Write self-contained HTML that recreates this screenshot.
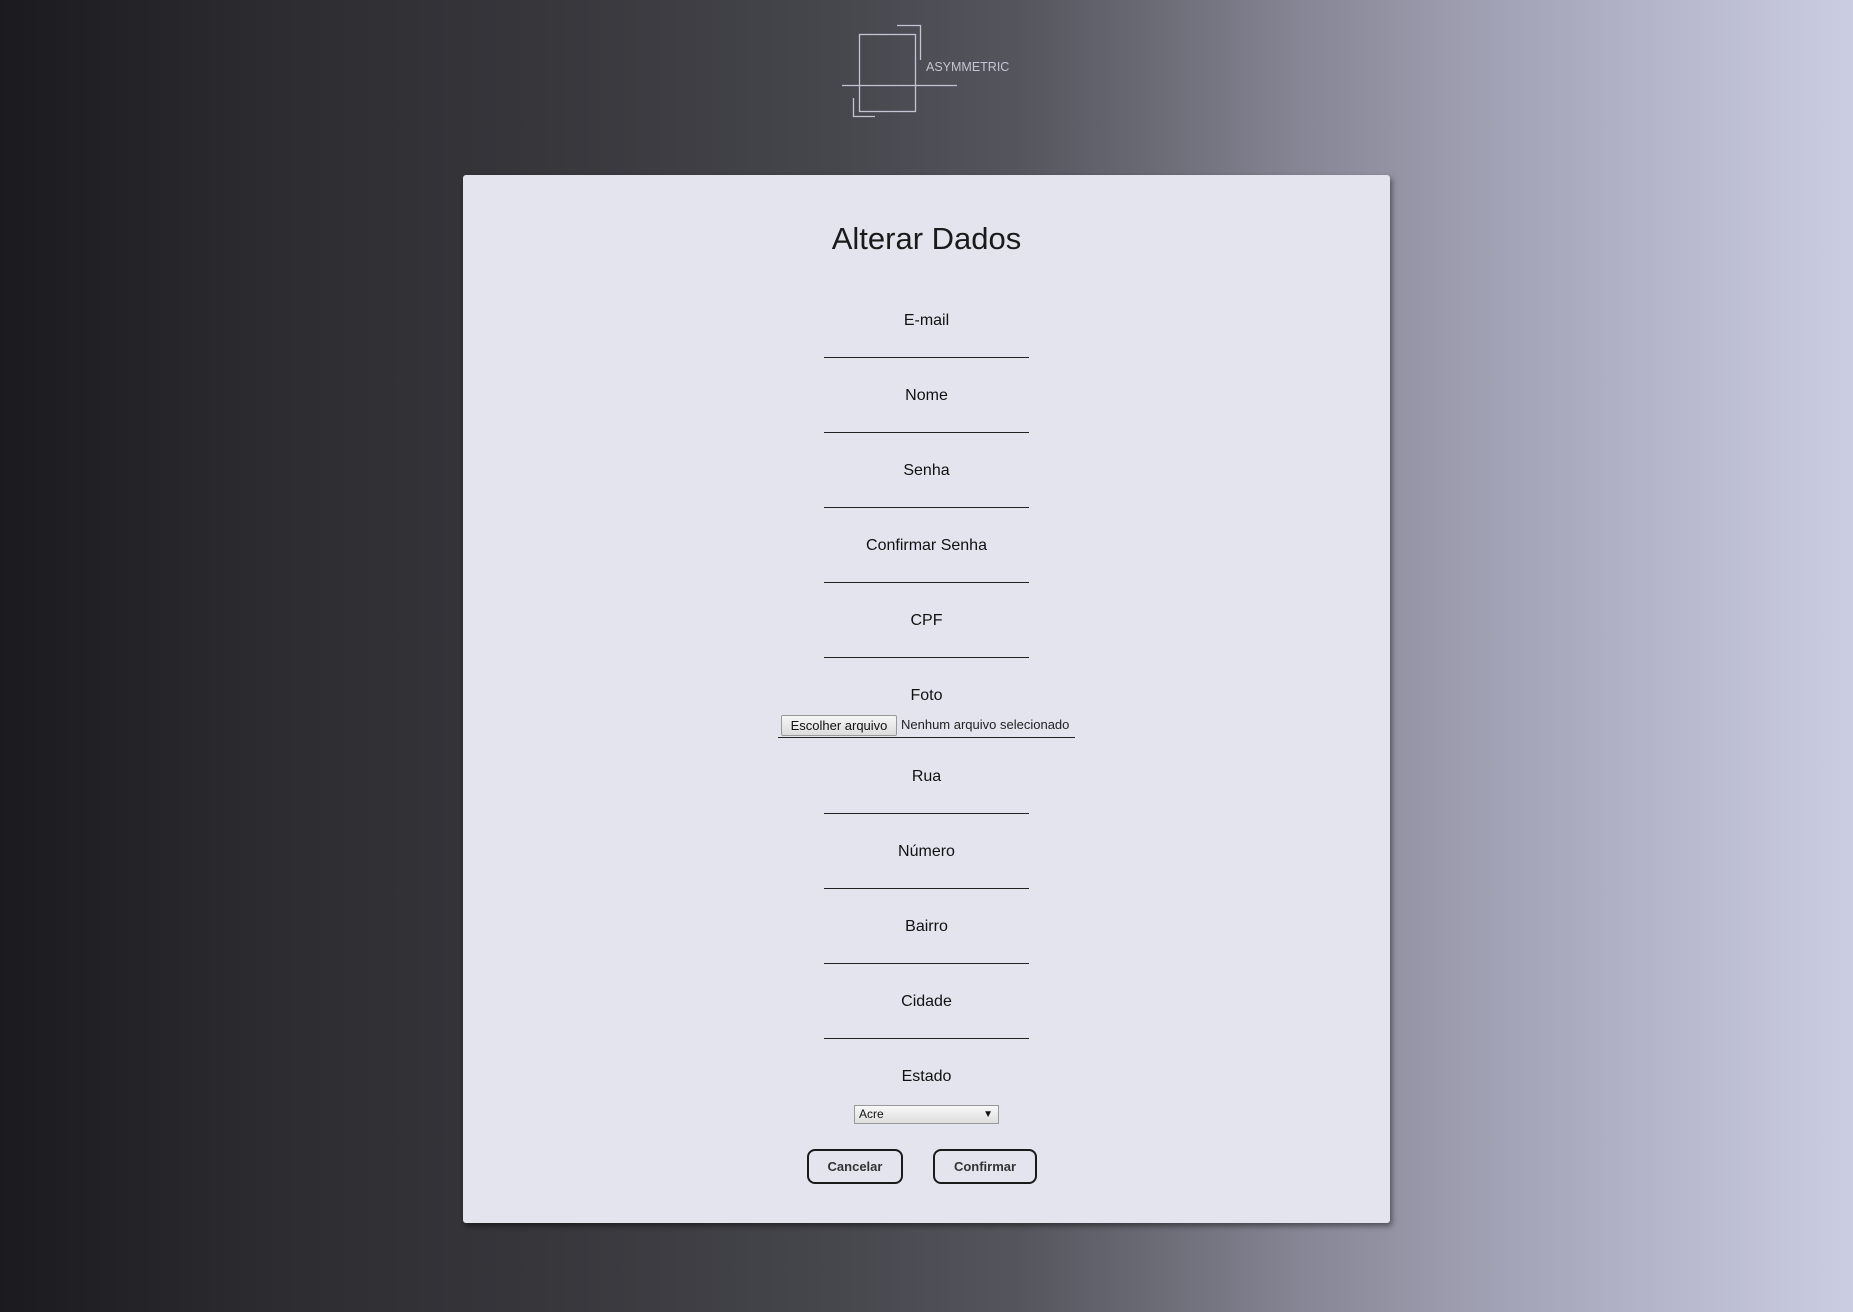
<!DOCTYPE html>
<html><head><meta charset="utf-8"><style>
html,body{margin:0;padding:0;}
body{width:1853px;height:1312px;position:relative;overflow:hidden;font-family:"Liberation Sans",sans-serif;
background:linear-gradient(to right,#1b1b1f 0%,#2c2c31 15%,#37373c 30%,#46464d 45%,#55555d 55%,#6a6a75 62%,#858594 70%,#a0a0b3 80%,#b6b7cc 90%,#cbcde3 100%);}
.card{position:absolute;left:463px;top:175px;width:927px;height:1048px;background:#e4e4ee;border-radius:3px;box-shadow:2px 3px 6px rgba(0,0,0,.45);}
.t{position:absolute;left:0;width:1853px;text-align:center;color:#111;}
h1{position:absolute;left:0;width:1853px;text-align:center;margin:0;top:221px;font-weight:normal;font-size:31px;color:#1a1a1a;}
.lbl{font-size:16px;}
.ln{position:absolute;left:824px;width:205px;height:1px;background:#222;}
.btn{position:absolute;top:1149px;height:31px;border:2px solid #1a1a1a;border-radius:8px;background:#e4e4ee;font-weight:bold;font-size:13px;color:#333;text-align:center;line-height:31px;box-sizing:content-box;}
</style></head><body>
<svg style="position:absolute;left:0;top:0" width="1853" height="140">
<g stroke="#c4c4d4" stroke-width="1.3" fill="none">
<rect x="859.5" y="34.5" width="56" height="77"/>
<polyline points="897,25.5 920.5,25.5 920.5,60"/>
<line x1="842" y1="85.5" x2="957" y2="85.5"/>
<polyline points="853.5,98 853.5,116.5 875,116.5"/>
</g>
<text x="926" y="71" font-family="Liberation Sans" font-size="12.5" fill="#c4c4d4">ASYMMETRIC</text>
</svg>
<div class="card"></div>
<h1>Alterar Dados</h1>
<div class="t lbl" style="top:312px">E-mail</div><div class="ln" style="top:357px"></div>
<div class="t lbl" style="top:387px">Nome</div><div class="ln" style="top:432px"></div>
<div class="t lbl" style="top:462px">Senha</div><div class="ln" style="top:507px"></div>
<div class="t lbl" style="top:537px">Confirmar Senha</div><div class="ln" style="top:582px"></div>
<div class="t lbl" style="top:612px">CPF</div><div class="ln" style="top:657px"></div>
<div class="t lbl" style="top:687px">Foto</div>
<div style="position:absolute;left:781px;top:715px;width:114px;height:19px;border:1px solid #999;border-radius:2px;background:linear-gradient(#f6f6f6,#dcdcdc);font-size:13px;line-height:19px;text-align:center;color:#111">Escolher arquivo</div>
<div style="position:absolute;left:901px;top:717px;font-size:13px;color:#222">Nenhum arquivo selecionado</div>
<div style="position:absolute;left:778px;top:737px;width:297px;height:1px;background:#222"></div>
<div class="t lbl" style="top:768px">Rua</div><div class="ln" style="top:813px"></div>
<div class="t lbl" style="top:843px">Número</div><div class="ln" style="top:888px"></div>
<div class="t lbl" style="top:918px">Bairro</div><div class="ln" style="top:963px"></div>
<div class="t lbl" style="top:993px">Cidade</div><div class="ln" style="top:1038px"></div>
<div class="t lbl" style="top:1068px">Estado</div>
<div style="position:absolute;left:854px;top:1105px;width:143px;height:17px;border:1px solid #999;background:linear-gradient(#f8f8f8,#dedede);font-size:12px;line-height:17px;color:#111;box-sizing:content-box"><span style="margin-left:4px">Acre</span><span style="position:absolute;right:5px;top:0;font-size:10px">▼</span></div>
<div class="btn" style="left:807px;width:92px">Cancelar</div>
<div class="btn" style="left:933px;width:100px">Confirmar</div>
</body></html>
